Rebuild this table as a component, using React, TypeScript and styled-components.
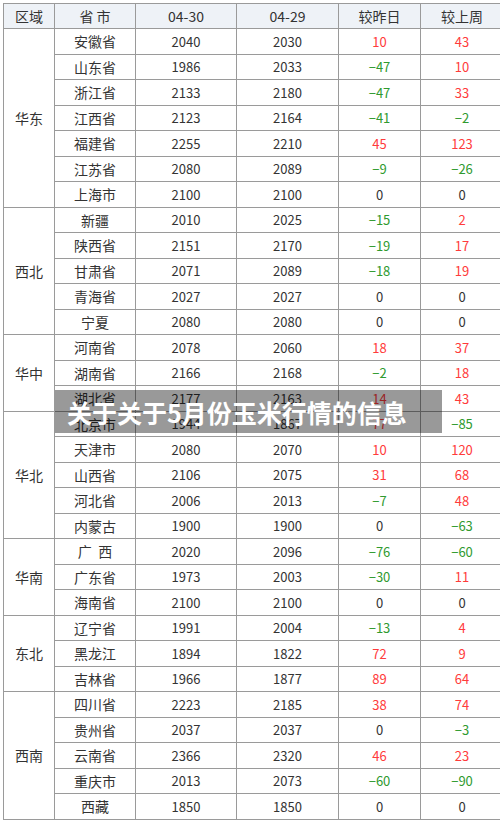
import styled, { createGlobalStyle } from 'styled-components';

type Row = { name: string; d30: number; d29: number; day: number; week: number };
type Group = { region: string; rows: Row[] };

const data: Group[] = [
  {
    region: '华东',
    rows: [
      { name: '安徽省', d30: 2040, d29: 2030, day: 10, week: 43 },
      { name: '山东省', d30: 1986, d29: 2033, day: -47, week: 10 },
      { name: '浙江省', d30: 2133, d29: 2180, day: -47, week: 33 },
      { name: '江西省', d30: 2123, d29: 2164, day: -41, week: -2 },
      { name: '福建省', d30: 2255, d29: 2210, day: 45, week: 123 },
      { name: '江苏省', d30: 2080, d29: 2089, day: -9, week: -26 },
      { name: '上海市', d30: 2100, d29: 2100, day: 0, week: 0 },
    ],
  },
  {
    region: '西北',
    rows: [
      { name: '新疆', d30: 2010, d29: 2025, day: -15, week: 2 },
      { name: '陕西省', d30: 2151, d29: 2170, day: -19, week: 17 },
      { name: '甘肃省', d30: 2071, d29: 2089, day: -18, week: 19 },
      { name: '青海省', d30: 2027, d29: 2027, day: 0, week: 0 },
      { name: '宁夏', d30: 2080, d29: 2080, day: 0, week: 0 },
    ],
  },
  {
    region: '华中',
    rows: [
      { name: '河南省', d30: 2078, d29: 2060, day: 18, week: 37 },
      { name: '湖南省', d30: 2166, d29: 2168, day: -2, week: 18 },
      { name: '湖北省', d30: 2177, d29: 2163, day: 14, week: 43 },
    ],
  },
  {
    region: '华北',
    rows: [
      { name: '北京市', d30: 1944, d29: 1867, day: 77, week: -85 },
      { name: '天津市', d30: 2080, d29: 2070, day: 10, week: 120 },
      { name: '山西省', d30: 2106, d29: 2075, day: 31, week: 68 },
      { name: '河北省', d30: 2006, d29: 2013, day: -7, week: 48 },
      { name: '内蒙古', d30: 1900, d29: 1900, day: 0, week: -63 },
    ],
  },
  {
    region: '华南',
    rows: [
      { name: '广  西', d30: 2020, d29: 2096, day: -76, week: -60 },
      { name: '广东省', d30: 1973, d29: 2003, day: -30, week: 11 },
      { name: '海南省', d30: 2100, d29: 2100, day: 0, week: 0 },
    ],
  },
  {
    region: '东北',
    rows: [
      { name: '辽宁省', d30: 1991, d29: 2004, day: -13, week: 4 },
      { name: '黑龙江', d30: 1894, d29: 1822, day: 72, week: 9 },
      { name: '吉林省', d30: 1966, d29: 1877, day: 89, week: 64 },
    ],
  },
  {
    region: '西南',
    rows: [
      { name: '四川省', d30: 2223, d29: 2185, day: 38, week: 74 },
      { name: '贵州省', d30: 2037, d29: 2037, day: 0, week: -3 },
      { name: '云南省', d30: 2366, d29: 2320, day: 46, week: 23 },
      { name: '重庆市', d30: 2013, d29: 2073, day: -60, week: -90 },
      { name: '西藏', d30: 1850, d29: 1850, day: 0, week: 0 },
    ],
  },
];

const GlobalStyle = createGlobalStyle`
  body {
    margin: 0;
    background: #fff;
    font-family: "Noto Sans CJK SC", "DejaVu Sans", sans-serif;
  }
`;

const Page = styled.div`
  position: relative;
  width: 500px;
  height: 824px;
  padding: 3px 0 0 3px;
  box-sizing: border-box;
`;

const Table = styled.table`
  border-collapse: collapse;
  table-layout: fixed;
  width: 494px;
  border: 1px solid #8a8a8a;
`;

const HeadCell = styled.th<{ $w: number }>`
  width: ${({ $w }) => $w}px;
  height: 24px;
  padding: 0;
  background: #eef2f7;
  border: 1px solid #9a9a9a;
  font-weight: 400;
  font-size: 14px;
  color: #333;
  text-align: center;
`;

const Cell = styled.td<{ $tone?: 'up' | 'down' | 'flat' }>`
  height: 24.5px;
  padding: 0;
  border: 1px solid #9a9a9a;
  text-align: center;
  font-size: 13px;
  line-height: 1;
  color: ${({ $tone }) =>
    $tone === 'up' ? '#ff3b3b' : $tone === 'down' ? '#2f9a2f' : '#333'};
`;

const RegionCell = styled(Cell)`
  font-size: 14px;
`;

const NameCell = styled(Cell)`
  font-size: 14px;
  white-space: pre;
`;

const Banner = styled.div`
  position: absolute;
  left: 55px;
  top: 390px;
  width: 387px;
  height: 43px;
  background: rgba(0, 0, 0, 0.4);
  display: flex;
  align-items: center;
  padding-left: 12px;
  box-sizing: border-box;
  color: #fff;
  font-size: 25px;
  font-weight: 700;
  white-space: nowrap;
`;

const tone = (v: number) => (v > 0 ? 'up' : v < 0 ? 'down' : 'flat');
const fmt = (v: number) => (v < 0 ? `−${Math.abs(v)}` : `${v}`);

export default function App() {
  return (
    <Page>
      <GlobalStyle />
      <Table>
        <thead>
          <tr>
            <HeadCell $w={50}>区域</HeadCell>
            <HeadCell $w={80}>省 市</HeadCell>
            <HeadCell $w={100}>04-30</HeadCell>
            <HeadCell $w={101}>04-29</HeadCell>
            <HeadCell $w={81}>较昨日</HeadCell>
            <HeadCell $w={82}>较上周</HeadCell>
          </tr>
        </thead>
        <tbody>
          {data.map((g) =>
            g.rows.map((r, i) => (
              <tr key={g.region + r.name}>
                {i === 0 && <RegionCell rowSpan={g.rows.length}>{g.region}</RegionCell>}
                <NameCell>{r.name}</NameCell>
                <Cell>{r.d30}</Cell>
                <Cell>{r.d29}</Cell>
                <Cell $tone={tone(r.day)}>{fmt(r.day)}</Cell>
                <Cell $tone={tone(r.week)}>{fmt(r.week)}</Cell>
              </tr>
            ))
          )}
        </tbody>
      </Table>
      <Banner>关于关于5月份玉米行情的信息</Banner>
    </Page>
  );
}
